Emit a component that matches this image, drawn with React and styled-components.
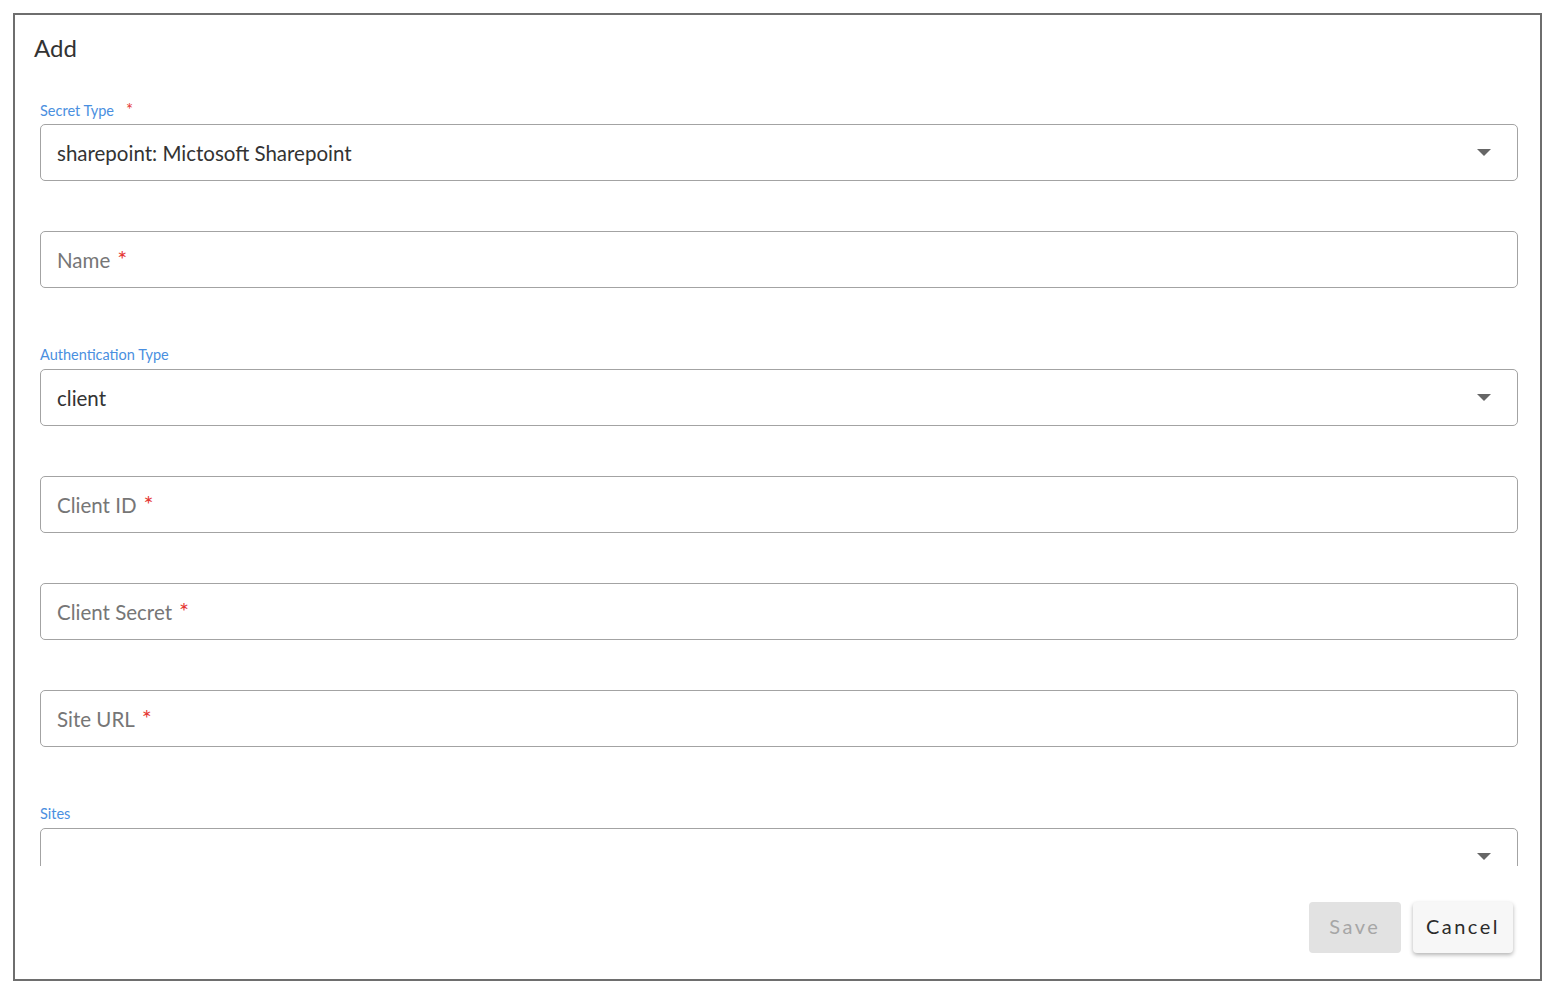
import React from 'react';
import styled, { createGlobalStyle } from 'styled-components';

const GlobalStyle = createGlobalStyle`
  html, body {
    margin: 0;
    padding: 0;
    background: #fff;
  }
  body {
    font-family: Lato, 'Noto Sans', sans-serif;
  }
`;

const Frame = styled.div`
  box-sizing: border-box;
  margin: 13px;
  width: 1529px;
  height: 968px;
  border: 2px solid #6e6e6e;
  display: flex;
  flex-direction: column;
`;

const Title = styled.h2`
  margin: 0;
  padding: 18px 0 0 19px;
  height: 30px;
  font: 400 24px/30px Lato, sans-serif;
  color: #333;
`;

const Content = styled.div`
  flex: 1 1 auto;
  overflow: hidden;
  padding: 30px 22px 0 25px;
  min-height: 0;
`;

const Group = styled.div`
  padding-top: ${(p) => (p.first ? 0 : 50)}px;
`;

const Label = styled.div`
  padding: 7px 0 4px;
  height: 20px;
  font: 400 14.5px/20px Lato, sans-serif;
  color: #4a8fe0;
`;

const Req = styled.span`
  color: #e53935;
  font-size: 1.15em;
  margin-left: ${(p) => p.gap || 4}px;
`;

const Field = styled.div`
  box-sizing: border-box;
  height: 57px;
  border: 1.5px solid #a3a3a3;
  border-radius: 5px;
  display: flex;
  align-items: center;
  padding: 0 26px 0 16px;
  font: 400 20.5px/24px Lato, sans-serif;
  color: ${(p) => (p.placeholder ? '#767676' : '#333')};
`;

const Value = styled.span`
  flex: 1 1 auto;
`;

const Arrow = styled.span`
  width: 0;
  height: 0;
  border-left: 7px solid transparent;
  border-right: 7px solid transparent;
  border-top: 7px solid #666;
`;

const Footer = styled.div`
  height: 113px;
  flex: 0 0 auto;
  display: flex;
  justify-content: flex-end;
  align-items: flex-start;
  gap: 12px;
  padding: 36px 27px 0 0;
  box-sizing: border-box;
`;

const Button = styled.button`
  height: 51px;
  padding: 0 13px;
  min-width: 92px;
  border: none;
  border-radius: 4px;
  font: 400 20px/24px Lato, sans-serif;
  letter-spacing: 2.5px;
  padding-bottom: 3px;
  background: ${(p) => (p.disabled ? '#e2e2e2' : '#f7f7f7')};
  color: ${(p) => (p.disabled ? '#a6a6a6' : '#2b2b2b')};
  box-shadow: ${(p) => (p.disabled ? 'none' : '0 2px 4px rgba(0,0,0,0.3)')};
`;

function SelectField({ label, required, value }) {
  return (
    <>
      <Label>
        {label}
        {required && <Req gap={12}>*</Req>}
      </Label>
      <Field>
        <Value>{value}</Value>
        <Arrow />
      </Field>
    </>
  );
}

function TextField({ placeholder }) {
  return (
    <Field placeholder>
      <Value>
        {placeholder}
        <Req gap={7}>*</Req>
      </Value>
    </Field>
  );
}

export default function App() {
  return (
    <>
      <GlobalStyle />
      <Frame>
        <Title>Add</Title>
        <Content>
          <Group first>
            <SelectField label="Secret Type" required value="sharepoint: Mictosoft Sharepoint" />
          </Group>
          <Group>
            <TextField placeholder="Name" />
          </Group>
          <Group>
            <SelectField label="Authentication Type" value="client" />
          </Group>
          <Group>
            <TextField placeholder="Client ID" />
          </Group>
          <Group>
            <TextField placeholder="Client Secret" />
          </Group>
          <Group>
            <TextField placeholder="Site URL" />
          </Group>
          <Group>
            <SelectField label="Sites" value="" />
          </Group>
        </Content>
        <Footer>
          <Button disabled>Save</Button>
          <Button>Cancel</Button>
        </Footer>
      </Frame>
    </>
  );
}
